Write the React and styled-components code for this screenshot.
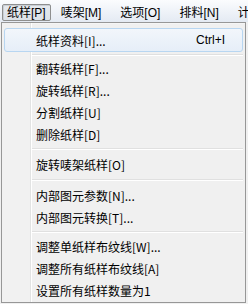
import React from 'react';
import styled, { createGlobalStyle } from 'styled-components';

const GlobalStyle = createGlobalStyle`
    html, body {
        margin: 0;
        padding: 0;
        background: #ffffff;
    }
    body {
        font-family: "Noto Sans CJK SC", "Microsoft YaHei", sans-serif;
        font-size: 12px;
        color: #000;
    }
`;

const menus = ['纸样[P]', '唛架[M]', '选项[O]', '排料[N]', '计算'];

// groups of items, the number is the height of the separator above
const groups = [
    { sep: 0, items: [{ label: '纸样资料[I]...', key: 'Ctrl+I', active: true }] },
    {
        sep: 5,
        items: [
            { label: '翻转纸样[F]...' },
            { label: '旋转纸样[R]...' },
            { label: '分割纸样[U]' },
            { label: '删除纸样[D]' },
        ],
    },
    { sep: 8, items: [{ label: '旋转唛架纸样[O]' }] },
    {
        sep: 9,
        items: [
            { label: '内部图元参数[N]...' },
            { label: '内部图元转换[T]...' },
        ],
    },
    {
        sep: 7,
        items: [
            { label: '调整单纸样布纹线[W]...' },
            { label: '调整所有纸样布纹线[A]' },
            { label: '设置所有纸样数量为1' },
        ],
    },
];

const App = () => {
    return (
        <>
            <GlobalStyle />
            <StyledPage>
                <StyledMenuBar>
                    {menus.map((m, i) => (
                        <StyledMenuTitle key={m} open={i === 0}>{m}</StyledMenuTitle>
                    ))}
                </StyledMenuBar>
                <StyledDropdown>
                    <StyledGutter />
                    <StyledList>
                        {groups.map((g, gi) => (
                            <React.Fragment key={gi}>
                                {g.sep > 0 && <StyledSeparator h={g.sep} />}
                                {g.items.map((item) => (
                                    <StyledItem key={item.label} active={item.active}>
                                        <span>{item.label}</span>
                                        {item.key && <StyledShortcut>{item.key}</StyledShortcut>}
                                    </StyledItem>
                                ))}
                            </React.Fragment>
                        ))}
                    </StyledList>
                </StyledDropdown>
            </StyledPage>
        </>
    );
};

const StyledPage = styled.div`
    width: 248px;
    height: 304px;
    overflow: hidden;
    background: #f0f0f0;
    display: flex;
    flex-direction: column;
`

const StyledMenuBar = styled.div`
    height: 22px;
    display: flex;
    align-items: flex-end;
    padding: 0 0 0 2px;
    background: linear-gradient(to bottom, #fbfcfe 0%, #eef2f8 55%, #e4eaf3 100%);
    white-space: nowrap;
    font-family: "Liberation Sans", "Noto Sans CJK SC", sans-serif;
`

const StyledMenuTitle = styled.div`
    box-sizing: border-box;
    height: 17px;
    line-height: 16px;
    padding: 0 ${props => props.open ? '4px' : '6px'};
    margin-right: ${props => props.open ? '3px' : '5px'};
    margin-bottom: 1px;
    border: 1px solid ${props => props.open ? '#8e8f8f' : 'transparent'};
    border-radius: 2px;
    background: ${props => props.open ? 'linear-gradient(to bottom, #e5e9ee, #dde2e8)' : 'transparent'};
    box-shadow: ${props => props.open ? 'inset 1px 1px 0 #c9ced4' : 'none'};
`

const StyledDropdown = styled.div`
    flex: 1;
    margin: 0 2px 1px 1px;
    border: 1px solid #979797;
    background: #f0f0f0;
    box-shadow: inset 1px 1px 0 #f5f5f5;
    position: relative;
    display: flex;
`

const StyledGutter = styled.div`
    width: 28px;
    flex-shrink: 0;
    background: #f1f1f1;
    border-right: 1px solid #e2e3e3;
    box-shadow: 1px 0 0 #ffffff;
`

const StyledList = styled.div`
    position: absolute;
    top: 0;
    left: 0;
    right: 0;
    padding: 5px 2px 0;
    display: flex;
    flex-direction: column;
`

const StyledItem = styled.div`
    box-sizing: border-box;
    height: ${props => props.active ? '24px' : '22px'};
    display: flex;
    align-items: center;
    justify-content: space-between;
    padding: 0 17px 0 31px;
    border: 1px solid ${props => props.active ? '#b8d6f1' : 'transparent'};
    border-radius: 3px;
    background: ${props => props.active ? 'linear-gradient(to bottom, #f2f6fb, #e6eef8)' : 'transparent'};
    white-space: nowrap;
`

const StyledShortcut = styled.span`
    font-family: "Liberation Sans", Arial, sans-serif;
`

const StyledSeparator = styled.div`
    height: ${props => props.h}px;
    margin-left: 28px;
    display: flex;
    flex-direction: column;
    justify-content: center;
    &::before {
        content: '';
        height: 1px;
        background: #e0e0e0;
        border-bottom: 1px solid #ffffff;
    }
`

export default App;
